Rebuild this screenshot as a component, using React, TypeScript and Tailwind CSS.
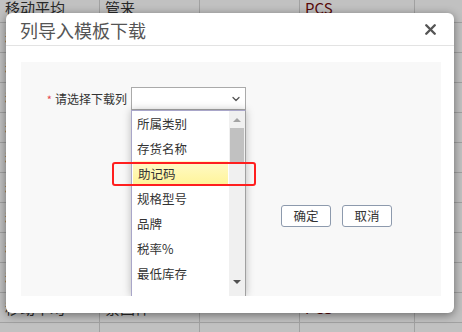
import { ChevronDown, X } from "lucide-react";

const rows = [
  ["移动平均", "管来", "", "PCS", ""],
  ["移动平均", "", "", "PCS", ""],
  ["移动平均", "", "", "PCS", ""],
  ["移动平均", "", "", "PCS", ""],
  ["移动平均", "", "", "PCS", ""],
  ["移动平均", "", "", "PCS", ""],
  ["移动平均", "", "", "PCS", ""],
  ["移动平均", "", "", "PCS", ""],
  ["移动平均", "", "", "PCS", ""],
  ["移动平均", "", "", "PCS", ""],
  ["移动平均", "紧固件", "", "PCS", ""],
  ["", "", "", "", ""],
];

const options = ["所属类别", "存货名称", "助记码", "规格型号", "品牌", "税率%", "最低库存"];

const font = "font-['Noto_Sans_CJK_SC','Noto_Sans',sans-serif]";

const BackgroundTable = () => (
  <div className="mt-[-7px] flex flex-col">
    {rows.map((r, i) => (
      <div key={i} className="flex h-[30px] border-b border-[#a8a8a8]">
        <div className="w-[100px] pl-[5px] leading-[30px] text-[15px] text-[#2a2a2a] border-r border-[#a8a8a8]">{r[0]}</div>
        <div className="w-[100px] pl-[5px] leading-[30px] text-[15px] text-[#2a2a2a] border-r border-[#a8a8a8]">{r[1]}</div>
        <div className="w-[100px] border-r border-[#a8a8a8]">{r[2]}</div>
        <div className="w-[115px] pl-[5px] leading-[30px] text-[15px] text-[#5c0a0a] border-r border-[#a8a8a8]">{r[3]}</div>
        <div className="flex-1" />
      </div>
    ))}
  </div>
);

const DropdownList = () => (
  <div className="absolute left-0 top-[22px] w-[115px] h-[186px] bg-white border border-b-0 border-[#a9a6c9] border-r-[#a0a0a0] shadow-[0_0_8px_rgba(0,0,0,0.25)] flex">
    <div className="flex-1 flex flex-col">
      {options.map((o) => (
        <div
          key={o}
          className={
            "h-[25px] pl-[5px] leading-[25px] text-[12.5px] text-[#333] " +
            (o === "助记码" ? "bg-[linear-gradient(#fffac8,#fff497)] mx-[1px] pl-[4px]" : "")
          }
        >
          {o}
        </div>
      ))}
    </div>
    <div className="w-[16px] bg-[#f0f0f0] flex flex-col items-center">
      <div className="h-[17px] flex items-center justify-center">
        <div className="w-0 h-0 border-x-[4px] border-x-transparent border-b-[4px] border-b-[#a3a3a3]" />
      </div>
      <div className="w-[14px] h-[36px] bg-[#c1c1c1]" />
      <div className="flex-1" />
      <div className="h-[14px] mb-[7px] flex items-center justify-center">
        <div className="w-0 h-0 border-x-[4px] border-x-transparent border-t-[4px] border-t-[#505050]" />
      </div>
    </div>
  </div>
);

export default function App() {
  return (
    <div className={"relative w-[462px] h-[332px] overflow-hidden bg-[#c9c9c9] " + font}>
      <BackgroundTable />
      <div className="absolute inset-0 bg-black/[0.04]" />

      <div className="absolute left-[6px] top-[13px] w-[448px] h-[300px] bg-white rounded-[6px] shadow-[0_2px_10px_rgba(0,0,0,0.45)] flex flex-col">
        <div className="h-[33px] flex items-center justify-between pl-[14px] pr-[15px] border-b border-[#e3e3e3]">
          <span className="text-[18px] text-[#555] leading-none mt-[1px]">列导入模板下载</span>
          <X className="w-[17px] h-[17px] text-[#555]" strokeWidth={3.4} />
        </div>

        <div className="flex-1 pl-[15px] pr-[13px] pt-[16px] pb-[17px]">
          <div className="h-full bg-[#f8f8f8] overflow-hidden relative pt-[25px]">
            <div className="flex items-center h-[23px]">
              <div className="w-[110px] flex justify-end items-center pr-[4px] text-[12px] text-[#333]">
                <span className="text-[#e5484d] mr-[3px] mt-[2px] text-[11px]">*</span>
                请选择下载列
              </div>
              <div className="relative w-[115px] h-[23px] bg-white border border-[#aaa] flex items-center justify-end pr-[3px]">
                <ChevronDown className="w-[12px] h-[12px] text-[#555]" strokeWidth={2.6} />
                <div className="absolute left-[-1px] top-0">
                  <DropdownList />
                </div>
              </div>
            </div>

            <div className="flex gap-[11px] pl-[260px] mt-[95px]">
              <button className="w-[50px] h-[22px] bg-white border border-[#8d9aad] rounded-[3px] text-[12.5px] text-[#333] leading-none">确定</button>
              <button className="w-[50px] h-[22px] bg-white border border-[#8d9aad] rounded-[3px] text-[12.5px] text-[#333] leading-none">取消</button>
            </div>

            <div className="absolute left-[91px] top-[100px] w-[144px] h-[24px] border-2 border-[#ff1f1f] rounded-[3px]" />
          </div>
        </div>
      </div>
    </div>
  );
}
